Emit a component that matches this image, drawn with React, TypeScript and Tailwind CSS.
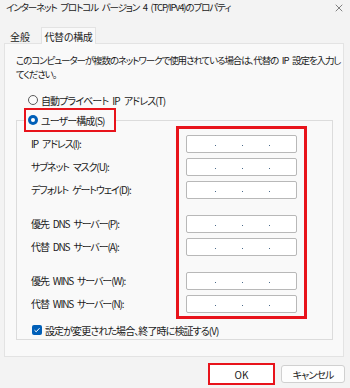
import { X } from 'lucide-react';

const FONT = "[font-family:'Noto_Sans_CJK_JP','Noto_Sans',sans-serif] [font-feature-settings:'palt']";
// en space, so word gaps survive the tight letter spacing
const S = '\u2002';

type Field = { label: string; gapBefore?: boolean };

const FIELDS: Field[] = [
  { label: `IP${S}アドレス(I):` },
  { label: `サブネット${S}マスク(U):` },
  { label: `デフォルト${S}ゲートウェイ(D):` },
  { label: `優先${S}DNS${S}サーバー(P):`, gapBefore: true },
  { label: `代替${S}DNS${S}サーバー(A):` },
  { label: `優先${S}WINS${S}サーバー(W):`, gapBefore: true },
  { label: `代替${S}WINS${S}サーバー(N):` },
];

// Empty IPv4 input with the three separator dots
function IpBox() {
  return (
    <div className="h-[18px] w-[111px] rounded-[2px] border border-[#b8b8b8] bg-white flex items-center">
      <div className="w-[28px]" />
      <div className="w-[1px] h-[1px] bg-[#4a6a8a] mt-[3px]" />
      <div className="w-[26px]" />
      <div className="w-[1px] h-[1px] bg-[#4a6a8a] mt-[3px]" />
      <div className="w-[26px]" />
      <div className="w-[1px] h-[1px] bg-[#4a6a8a] mt-[3px]" />
    </div>
  );
}

export default function App() {
  return (
    <div className={`w-[350px] h-[388px] bg-[#f3f3f3] text-[#1b1b1b] text-[10px] tracking-[-0.9px] ${FONT} overflow-hidden`}>
      {/* Title bar */}
      <div className="h-[16px] flex items-center justify-between pl-[6px] pr-[5px]">
        <span className="text-[9.5px] leading-none tracking-[-1.1px] whitespace-nowrap">
          {`インターネット${S}プロトコル${S}バージョン${S}4${S}(TCP/IPv4)のプロパティ`}
        </span>
        <X size={12} strokeWidth={1.2} className="text-[#333]" />
      </div>

      {/* Tabs */}
      <div className="mt-[11px] ml-[4px] h-[16px] flex items-end">
        <div className="w-[37px] h-[16px] pl-[6px] flex items-center pt-[2px] tracking-normal">全般</div>
        <div className="relative z-10 -mb-px w-[55px] h-[17px] border border-b-0 border-[#e3e3e3] bg-[#f9f9f9] flex items-center justify-center tracking-[-0.3px]">
          代替の構成
        </div>
      </div>

      {/* Tab page */}
      <div className="ml-[4px] w-[340px] h-[314px] border border-[#e3e3e3] bg-[#f9f9f9] pl-[11px]">
        <p className="pt-[9px] leading-[14px] whitespace-nowrap text-[9.5px] tracking-[-1.1px]">
          {`このコンピューターが複数のネットワークで使用されている場合は、代替の${S}IP${S}設定を入力し`}
          <br />
          てください。
        </p>

        {/* Automatic private address */}
        <div className="mt-[13px] ml-[12px] h-[12px] flex items-center gap-[3px]">
          <div className="w-[10px] h-[10px] rounded-full border border-[#5a5a5a] bg-[#fbfbfb]" />
          <span className="whitespace-nowrap">{`自動プライベート${S}IP${S}アドレス(T)`}</span>
        </div>

        {/* Group box for user configuration */}
        <div className="mt-[14px] w-[317px] h-[220px] border border-[#dcdcdc]">
          <div className="-mt-[13px] ml-[7px] w-[92px] h-[24px] border-2 border-[#e8131b] bg-[#f9f9f9] flex items-center pl-[2px] gap-[3px]">
            <div className="w-[10px] h-[10px] rounded-full bg-[#005fb8] flex items-center justify-center">
              <div className="w-[4px] h-[4px] rounded-full bg-white" />
            </div>
            <span>ユーザー構成(S)</span>
          </div>

          <div className="-mt-[6px] flex items-start">
            <div className="w-[159px] pl-[14px] pt-[6px] tracking-[-1.1px]">
              {FIELDS.map((f) => (
                <div key={f.label} className={`h-[23px] flex items-center whitespace-nowrap ${f.gapBefore ? 'mt-[11px]' : ''}`}>
                  {f.label}
                </div>
              ))}
            </div>
            <div className="w-[131px] border-[3px] border-[#e8131b] pt-[3px] pb-[1px] pl-[7px]">
              {FIELDS.map((f) => (
                <div key={f.label} className={`h-[23px] flex items-center ${f.gapBefore ? 'mt-[11px]' : ''}`}>
                  <IpBox />
                </div>
              ))}
            </div>
          </div>

          <div className="mt-[6px] ml-[15px] h-[10px] flex items-center gap-[3px]">
            <div className="w-[10px] h-[10px] rounded-[2px] bg-[#005fb8] flex items-center justify-center">
              <svg width="8" height="8" viewBox="0 0 8 8" fill="none">
                <path d="M1.5 4.2 L3.2 5.8 L6.5 2.2" stroke="white" strokeWidth="1" />
              </svg>
            </div>
            <span className="whitespace-nowrap">設定が変更された場合、終了時に検証する(V)</span>
          </div>
        </div>
      </div>

      {/* Dialog buttons */}
      <div className="mt-[6px] flex justify-end items-center pr-[5px] gap-[6px]">
        <div className="border-2 border-[#e8131b] p-0">
          <button type="button" className="w-[63px] h-[18px] bg-white flex items-center justify-center tracking-normal">
            OK
          </button>
        </div>
        <button
          type="button"
          className="w-[64px] h-[18px] rounded-[3px] border border-[#d0d0d0] bg-[#fdfdfd] flex items-center justify-center"
        >
          キャンセル
        </button>
      </div>
    </div>
  );
}
